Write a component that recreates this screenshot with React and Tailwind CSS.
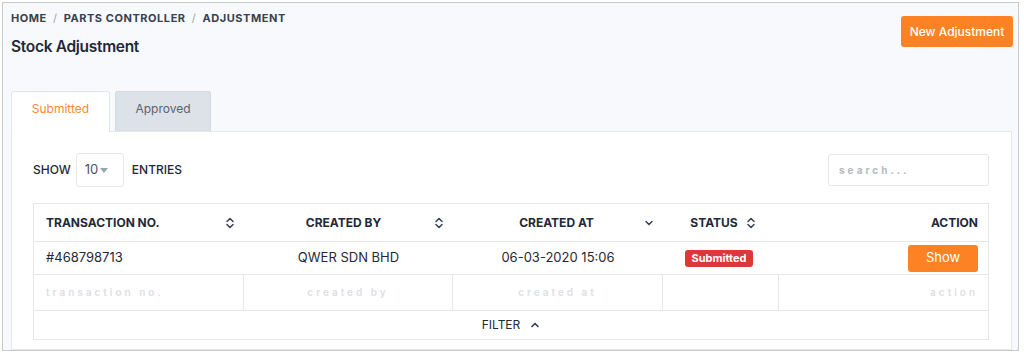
import React from "react";

const Sort = ({ className = "" }) => (
  <svg width="10" height="12" viewBox="0 0 10 12" className={className} fill="none" stroke="#374151" strokeWidth="1.5" strokeLinecap="round" strokeLinejoin="round">
    <path d="M2 4.5 L5 1.5 L8 4.5" />
    <path d="M2 7.5 L5 10.5 L8 7.5" />
  </svg>
);

const ChevDown = () => (
  <svg width="10" height="8" viewBox="0 0 10 8" fill="none" stroke="#374151" strokeWidth="1.5" strokeLinecap="round" strokeLinejoin="round">
    <path d="M2 2.5 L5 5.5 L8 2.5" />
  </svg>
);

const ChevUp = () => (
  <svg width="10" height="8" viewBox="0 0 10 8" fill="none" stroke="#374151" strokeWidth="1.7" strokeLinecap="round" strokeLinejoin="round">
    <path d="M2 5.5 L5 2.5 L8 5.5" />
  </svg>
);

export default function App() {
  return (
    <div className="w-[1024px] h-[353px] bg-white pt-[2px] pl-[2px]" style={{ fontFamily: "Inter, 'Noto Sans', sans-serif" }}>
      <div className="w-[1017px] h-[349px] border border-[#c9c9c9] bg-[#f8f9fc] overflow-hidden flex flex-col">
        {/* header */}
        <div className="flex justify-between pl-[8px] pr-[5px] pt-[7px]">
          <div>
            <div className="text-[11px] font-bold tracking-[0.05em] text-[#374151] leading-[16px]">
              HOME <span className="text-[#9ca3af] font-normal mx-[3px]">/</span> PARTS CONTROLLER <span className="text-[#9ca3af] font-normal mx-[3px]">/</span> ADJUSTMENT
            </div>
            <div className="text-[15.5px] font-semibold text-[#1f2937] mt-[11px] leading-[20px] tracking-[-0.02em]">Stock Adjustment</div>
          </div>
          <button className="mt-[6px] w-[112px] h-[31px] rounded-[3px] bg-[#fd8224] text-white text-[12px] font-medium">New Adjustment</button>
        </div>

        {/* tabs */}
        <div className="flex items-end pl-[8px] mt-[33px] gap-[5px] h-[41px]">
          <div className="w-[99px] h-[41px] bg-white border border-[#e1e4ea] border-b-0 rounded-t-[3px] flex items-center justify-center pb-[6px] text-[12px] text-[#fb8a2e] relative z-10 -mb-px">Submitted</div>
          <div className="w-[96px] h-[40px] bg-[#dde1e8] border border-[#d3d7de] border-b-0 rounded-t-[3px] flex items-center justify-center pb-[5px] text-[12px] text-[#5b6270]">Approved</div>
        </div>

        {/* panel */}
        <div className="ml-[8px] w-[1001px] flex-1 bg-white border border-[#e5e7eb] pl-[21px] pr-[22px] pt-[21px]">
          <div className="flex items-center justify-between">
            <div className="flex items-center text-[12px] text-[#1f2937] font-medium">
              <span>SHOW</span>
              <div className="ml-[5px] w-[48px] h-[34px] border border-[#e5e7eb] rounded-[3px] flex items-center pl-[8px] text-[13px] text-[#4b5563] font-normal">
                10
                <svg width="8" height="5" viewBox="0 0 8 5" className="ml-[2px]"><path d="M0 0 L8 0 L4 5 Z" fill="#9ca3af" /></svg>
              </div>
              <span className="ml-[8px]">ENTRIES</span>
            </div>
            <div className="w-[161px] h-[32px] border border-[#e5e7eb] rounded-[3px] flex items-center pl-[10px] text-[10px] font-bold tracking-[0.3em] text-[#b4b8c0]">search...</div>
          </div>

          <div className="mt-[16px] border border-[#e5e7eb] w-[956px]">
            <div className="grid grid-cols-[210px_209px_210px_116px_209px] h-[38px] border-b border-[#e5e7eb] text-[12px] font-bold text-[#1f2937] items-center">
              <div className="flex items-center justify-between pl-[12px] pr-[9px]"><span>TRANSACTION NO.</span><Sort /></div>
              <div className="flex items-center pr-[9px]"><span className="flex-1 text-center pl-[9px]">CREATED BY</span><Sort /></div>
              <div className="flex items-center pr-[9px]"><span className="flex-1 text-center pl-[16px]">CREATED AT</span><ChevDown /></div>
              <div className="flex items-center justify-center gap-[8px] pl-[4px]"><span>STATUS</span><Sort /></div>
              <div className="text-right pr-[10px]">ACTION</div>
            </div>
            <div className="grid grid-cols-[210px_209px_210px_116px_209px] h-[33px] border-b border-[#e5e7eb] text-[13px] text-[#1f2937] items-center">
              <div className="pl-[12px]">#468798713</div>
              <div className="text-center">QWER SDN BHD</div>
              <div className="text-center">06-03-2020 15:06</div>
              <div className="flex justify-center pr-[4px]"><span className="bg-[#df3737] text-white text-[11px] font-bold rounded-[3px] px-[6px] h-[17px] leading-[17px]">Submitted</span></div>
              <div className="flex justify-end pr-[10px]"><button className="w-[70px] h-[27px] bg-[#fd8224] text-white text-[13px] rounded-[3px]">Show</button></div>
            </div>
            <div className="grid grid-cols-[210px_209px_210px_116px_209px] h-[36px] border-b border-[#e5e7eb] text-[10px] font-semibold tracking-[0.3em] text-[#dde0e5] items-center">
              <div className="pl-[12px] h-full flex items-center border-r border-[#e5e7eb]">transaction no.</div>
              <div className="h-full flex items-center justify-center border-r border-[#e5e7eb]">created by</div>
              <div className="h-full flex items-center justify-center border-r border-[#e5e7eb]">created at</div>
              <div className="h-full border-r border-[#e5e7eb]"></div>
              <div className="h-full flex items-center justify-end pr-[10px]">action</div>
            </div>
            <div className="h-[28px] flex items-center justify-center gap-[10px] text-[12px] text-[#1f2937]">
              <span>FILTER</span><ChevUp />
            </div>
          </div>
        </div>
      </div>
    </div>
  );
}
